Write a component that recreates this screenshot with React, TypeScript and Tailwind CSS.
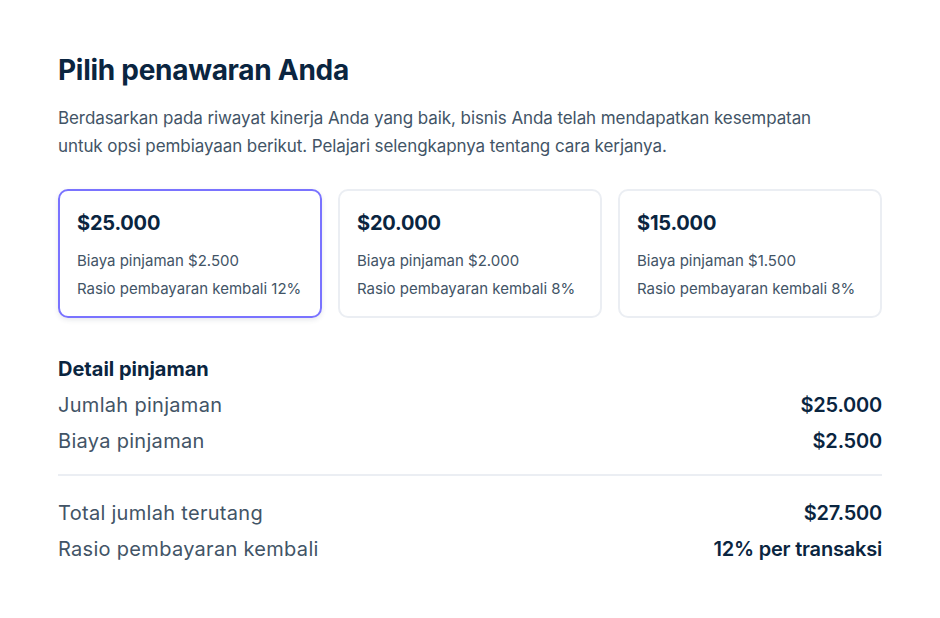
import React from 'react'

const offers = [
    { amount: '$25.000', fee: '$2.500', rate: '12%' },
    { amount: '$20.000', fee: '$2.000', rate: '8%' },
    { amount: '$15.000', fee: '$1.500', rate: '8%' },
]

const Row = ({ label, value }: { label: string; value: string }) => (
    <div className='flex justify-between items-center h-[36px]'>
        <span className='text-[20px] text-[#425466] tracking-[0.015em]'>{label}</span>
        <span className='text-[20px] font-semibold text-[#0a2540] tracking-[-0.01em]'>{value}</span>
    </div>
)

export default function App() {
    return (
        <main className='bg-white min-h-screen' style={{ fontFamily: 'Inter, "Noto Sans", sans-serif' }}>
            <section className='w-[824px] ml-[58px] pt-[52px]'>
                <h1 className='text-[28px] leading-[36px] font-bold text-[#0a2540] tracking-[-0.01em]'>
                    Pilih penawaran Anda
                </h1>
                <p className='mt-[16px] text-[17px] leading-[28px] text-[#425466] w-[770px] tracking-[-0.005em]'>
                    Berdasarkan pada riwayat kinerja Anda yang baik, bisnis Anda telah mendapatkan kesempatan untuk opsi pembiayaan berikut. Pelajari selengkapnya tentang cara kerjanya.
                </p>

                <div className='grid grid-cols-3 gap-4 mt-[29px]'>
                    {offers.map((o, i) => (
                        <div
                            key={o.amount}
                            className={
                                i === 0
                                    ? 'h-[129px] rounded-[10px] border-2 border-[#7a73ff] shadow-[0_2px_5px_rgba(60,66,87,0.12)] px-[17px] pt-[18px]'
                                    : 'h-[129px] rounded-[10px] border-2 border-[#ebeef3] px-[17px] pt-[18px]'
                            }
                        >
                            <div className='text-[20px] leading-[28px] font-bold text-[#0a2540] tracking-[-0.01em]'>{o.amount}</div>
                            <div className='mt-[10px] text-[15px] leading-[28px] text-[#425466]'>Biaya pinjaman {o.fee}</div>
                            <div className='text-[15px] leading-[28px] text-[#425466]'>Rasio pembayaran kembali {o.rate}</div>
                        </div>
                    ))}
                </div>

                <div className='mt-[33px]'>
                    <h2 className='text-[20px] leading-[36px] font-bold text-[#0a2540]'>Detail pinjaman</h2>
                    <Row label='Jumlah pinjaman' value='$25.000' />
                    <Row label='Biaya pinjaman' value='$2.500' />
                    <div className='border-t-2 border-[#ebeef3] mt-[15px] mb-[19px]' />
                    <Row label='Total jumlah terutang' value='$27.500' />
                    <Row label='Rasio pembayaran kembali' value='12% per transaksi' />
                </div>
            </section>
        </main>
    )
}
